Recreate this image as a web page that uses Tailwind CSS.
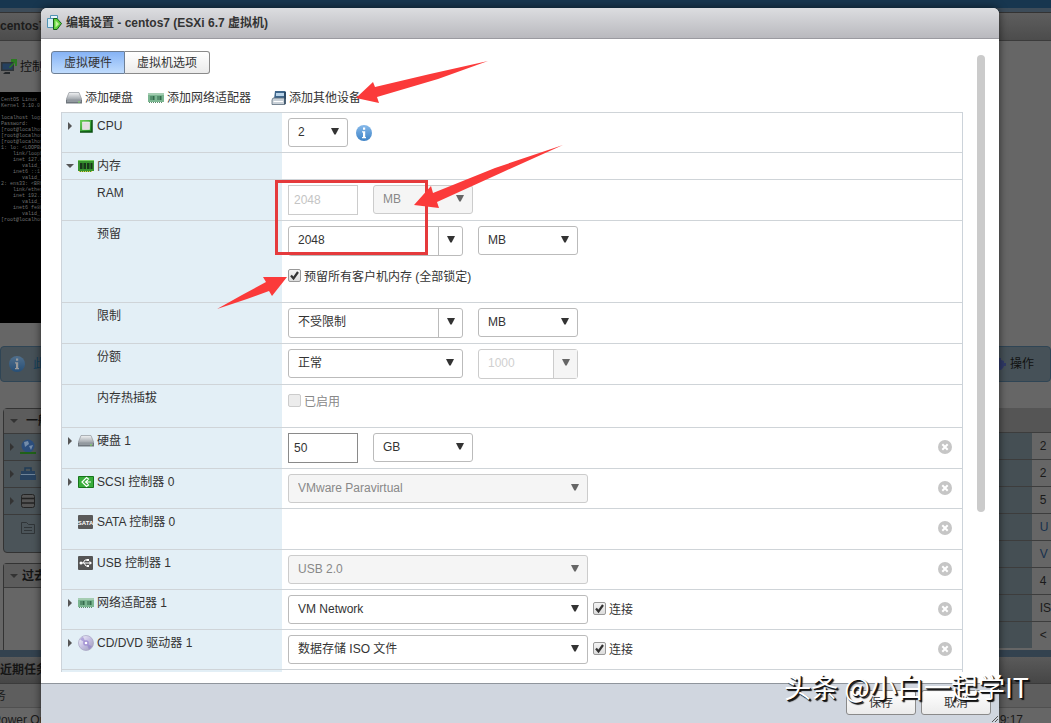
<!DOCTYPE html>
<html lang="zh-CN">
<head>
    <meta charset="UTF-8">
    <meta name="viewport" content="width=device-width, initial-scale=1.0">
    <title>编辑设置 - centos7</title>
    <script src="https://cdn.jsdelivr.net/npm/@tailwindcss/browser@4"></script>
</head>
<body class="relative h-screen overflow-hidden bg-[#666] font-['Liberation_Sans','Noto_Sans_CJK_SC',sans-serif] text-xs leading-4 text-[#333]">

    <!-- Icônes partagées -->
    <svg class="absolute size-0">
        <defs>
            <linearGradient id="g-disk" x1="0" y1="0" x2="0" y2="1"><stop offset="0" stop-color="#f2f3f4"/><stop offset="1" stop-color="#9aa0a6"/></linearGradient>
            <linearGradient id="g-info" x1="0" y1="0" x2="0" y2="1"><stop offset="0" stop-color="#86b9ea"/><stop offset="1" stop-color="#3f83c6"/></linearGradient>
            <linearGradient id="g-green" x1="0" y1="0" x2="1" y2="1"><stop offset="0" stop-color="#6fcf5a"/><stop offset="1" stop-color="#17801d"/></linearGradient>
            <linearGradient id="g-cd" x1="0" y1="0" x2="1" y2="1"><stop offset="0" stop-color="#fafafd"/><stop offset=".5" stop-color="#c5bfe2"/><stop offset="1" stop-color="#9d9cb8"/></linearGradient>
        </defs>
        <symbol id="i-down" viewBox="0 0 8 7"><path d="M0 0h8L4.700 6.500H3.300z" fill="currentColor"/></symbol>
        <symbol id="i-closed" viewBox="0 0 8 8"><path d="M2 0l4 4-4 4z" fill="#555"/></symbol>
        <symbol id="i-open" viewBox="0 0 8 8"><path d="M0 2h8L4 6z" fill="#555"/></symbol>
        <symbol id="i-check" viewBox="0 0 13 13"><path d="M3 6.500l2.500 3L10 3" fill="none" stroke="#333" stroke-width="2.200"/></symbol>
        <symbol id="i-remove" viewBox="0 0 14 14"><circle cx="7" cy="7" r="7" fill="#c6c6c6"/><path d="M4.300 4.300l5.400 5.400m0-5.400L4.300 9.700" stroke="#fff" stroke-width="2"/></symbol>
        <symbol id="i-info" viewBox="0 0 16 16"><circle cx="8" cy="8" r="8" fill="url(#g-info)"/><path d="M7 2.500h2.200v2.200H7zM6 6.300h3.200V12H10v1.200H6V12h1V7.500H6z" fill="#fff"/></symbol>
        <symbol id="i-disk" viewBox="0 0 16 16"><path d="M3 2.500h10l3 7.500H0z" fill="url(#g-disk)" stroke="#90969c" stroke-width=".7"/><path d="M0 10h16v3.500H0z" fill="#6f767d"/><path d="M1 11h14" stroke="#b7bdc3"/><path d="M12 12h2" stroke="#7be05f"/></symbol>
        <symbol id="i-nic" viewBox="0 0 16 16"><path d="M0 3h16v9H0z" fill="#7bb691"/><path d="M0 3h16v2H0z" fill="#a5cdb2"/><path d="M2.500 6h4v4h-4zM9.500 6h4v4h-4z" fill="#356b4c"/><path d="M4 6v4m7-4v4" stroke="#77b18d"/><path d="M1 12.500h14" stroke="#5b8a6c" stroke-dasharray="1 1"/></symbol>
        <symbol id="i-cpu" viewBox="0 0 16 16"><path d="M2 2h12v12H2z" fill="url(#g-green)"/><path d="M2 14h12V2" fill="none" stroke="#0b4f11" stroke-width="1.500"/><path d="M4.500 4h7v7.500h-7z" fill="#e5dde3" stroke="#f8f8f8" stroke-width=".6"/></symbol>
        <symbol id="i-ram" viewBox="0 0 16 16"><path d="M0 2h16v11h-2v1H1v-1H0z" fill="#37932e"/><path d="M0 2.500h16" stroke="#78cf62"/><path d="M2 5h2.500v6H2zM5.500 5H8v6H5.500zM9 5h2.500v6H9zM12.500 5H14.500v6h-2z" fill="#19371a"/><path d="M1 13.500h14" stroke="#e3c94d" stroke-dasharray="1 1"/></symbol>
        <symbol id="i-scsi" viewBox="0 0 16 16"><path d="M.5 2.500h15v11H.5z" fill="#38ad3b" stroke="#16741b"/><path d="M11 5.500L8.500 3.500 4 8l4.500 4.500 2.500-2M13 8H7.500m2.500-2L7.500 8l2.500 2" fill="none" stroke="#fff" stroke-width="1.200"/></symbol>
        <symbol id="i-sata" viewBox="0 0 16 16"><rect y="1" width="15" height="14" rx="1" fill="#5a5a5a"/><text x="7.500" y="10.500" text-anchor="middle" font-size="6" font-weight="700" fill="#fff">SATA</text></symbol>
        <symbol id="i-usb" viewBox="0 0 16 16"><rect y="1" width="15" height="14" rx="1" fill="#555"/><path d="M2 8h10M5 8l2-3h2M6 8l2 3h2" fill="none" stroke="#fff"/><circle cx="3" cy="8" r="1.500" fill="#fff"/><path d="M11.500 6l2.500 2-2.500 2zM8.500 4H11v2H8.500zM9 10h2v2H9z" fill="#fff"/></symbol>
        <symbol id="i-cd" viewBox="0 0 16 16"><circle cx="8" cy="8" r="7.500" fill="url(#g-cd)" stroke="#a6a4c2" stroke-width=".7"/><path d="M8 8L2 4.500A7 7 0 0 1 5 1.800zM8 8l6 3.500a7 7 0 0 1-3 2.700z" fill="#8b79cb" opacity=".55"/><circle cx="8" cy="8" r="2.800" fill="#a493d4"/><circle cx="8" cy="8" r="1.300" fill="#fff"/></symbol>
        <symbol id="i-device" viewBox="0 0 16 16"><path d="M4 1h10l1 1v7H3z" fill="#3f668b"/><path d="M5 3h8v3H5z" fill="#b9d4ea"/><path d="M2 8h12v6.500H1V10z" fill="#c8d0d7" stroke="#5c6c7b" stroke-width=".8"/><path d="M2.500 11.500H12" stroke="#fff"/><path d="M14 2v12" stroke="#29425a" stroke-width="1.500"/></symbol>
    </svg>

    <!-- Page derrière la boîte de dialogue -->
    <div class="flex h-full flex-col" aria-hidden="true">
        <div class="h-2 shrink-0 bg-[#17364f]"></div>
        <div class="h-[5px] shrink-0 border-b border-[#333] bg-[#3d4c59]"></div>
        <div class="h-7 shrink-0 border-b border-[#3b3b3b] bg-linear-to-b from-[#5e5e5e] to-[#4c4c4c] pt-[5px] font-bold text-[#1c1c1c]">centos7</div>
        <div class="flex h-[51px] shrink-0 items-center gap-[3px] pl-px text-[#111]">
            <svg class="size-4 shrink-0" viewBox="0 0 16 16"><path d="M0 3h13v9H0z" fill="#2f3438"/><path d="M1.500 4.500h10v6h-10z" fill="#24405f"/><path d="M4 13h5v2H2z" fill="#24282b"/><path d="M8 8l5-5h-3V0h6v7h-2V4L9 9z" fill="#2c7a22"/></svg>
            控制台
        </div>
        <div class="h-[231px] w-[300px] shrink-0 bg-black pt-[5px] pl-px font-['Liberation_Mono',monospace] text-[5px] leading-[6px] whitespace-pre text-[#707070]">CentOS Linux
Kernel 3.10.0

localhost login
Password:
[root@localhost
[root@localhost
[root@localhost
1: lo: &lt;LOOPBACK
    link/loopback
    inet 127.0.0
       valid_lft
    inet6 ::1
       valid_lft
2: ens33: &lt;BROAD
    link/ether
    inet 192.168
       valid_lft
    inet6 fe80
       valid_lft
[root@localhost</div>
        <div class="mt-[23px] flex h-9 shrink-0 items-center justify-between rounded border border-[#2f4555] bg-[#465158] pr-4 pl-2">
            <span class="flex items-center gap-2 text-[#12405c]"><svg class="size-4 brightness-60"><use href="#i-info"/></svg>此虚拟机</span>
            <span class="flex items-center gap-1 text-[#111]"><svg class="size-3" viewBox="0 0 12 12"><path d="M4 0h3v2l3 1v2h2v3h-2l-1 2-2 2H4L0 8V4z" fill="#303a68"/></svg>操作</span>
        </div>
        <div class="mt-[26px] flex h-[242px] shrink-0 justify-between">
            <div class="ml-[3px] flex w-[300px] flex-col gap-[10px]">
                <div class="h-[145px] rounded border border-[#333] bg-[#4b5459]">
                    <div class="flex h-6 items-center gap-2 bg-[#5c5c5c] pl-1.5 font-bold text-[#151515]"><svg class="size-2 brightness-60"><use href="#i-open"/></svg>一般</div>
                    <div class="flex h-[27px] items-center gap-1 border-t border-[#3b3b3b] pl-1"><svg class="size-2 brightness-60"><use href="#i-closed"/></svg><svg class="size-4" viewBox="0 0 16 16"><circle cx="8" cy="7" r="6.500" fill="#2c4e7d"/><path d="M4 3l4-1 1 3-4 3zM9 7l4-1-2 5z" fill="#748caa"/><path d="M0 13h16v2H0z" fill="#1f6118"/></svg></div>
                    <div class="flex h-[27px] items-center gap-1 border-t border-[#3b3b3b] pl-1"><svg class="size-2 brightness-60"><use href="#i-closed"/></svg><svg class="size-4" viewBox="0 0 16 16"><path d="M5 5V2h6v3" fill="none" stroke="#203b55" stroke-width="1.500"/><path d="M1 5h14v3H1zM0 9h16v5H0z" fill="#28425f"/><path d="M1 8.500h14" stroke="#6e8398"/></svg></div>
                    <div class="flex h-[27px] items-center gap-1 border-t border-[#3b3b3b] pl-1"><svg class="size-2 brightness-60"><use href="#i-closed"/></svg><svg class="size-4" viewBox="0 0 16 16"><rect x="1.500" y="1.500" width="13" height="13" rx="2" fill="#555" stroke="#242424"/><path d="M2 5.500h12M2 10h12" stroke="#222" stroke-width="1.500"/></svg></div>
                    <div class="flex h-[27px] items-center border-t border-[#3b3b3b] pl-4"><svg class="size-4" viewBox="0 0 16 16"><path d="M1.500 2.500h5l2 2h6v9h-13zM4 7.500h8M4 10.500h8" fill="none" stroke="#303538"/></svg></div>
                </div>
                <div class="h-[87px] rounded-t border border-b-0 border-[#333]">
                    <div class="flex h-6 items-center gap-1 border-b border-[#3b3b3b] bg-[#5c5c5c] pl-1.5 font-bold text-[#151515]"><svg class="size-2 brightness-60"><use href="#i-open"/></svg>过去</div>
                </div>
            </div>
            <table class="h-[240px] w-[300px] text-[#1a1a1a]">
                <tbody>
                    <tr class="h-6 bg-[#555]"><td class="w-[286px]"></td><td></td></tr>
                    <tr class="border-t border-[#3d3d3d]"><td class="bg-[#454f54]"></td><td class="pl-2">2</td></tr>
                    <tr class="border-t border-[#3d3d3d]"><td class="bg-[#454f54]"></td><td class="pl-2">2</td></tr>
                    <tr class="border-t border-[#3d3d3d]"><td class="bg-[#454f54]"></td><td class="pl-2">5</td></tr>
                    <tr class="border-t border-[#3d3d3d]"><td class="bg-[#454f54]"></td><td class="pl-2 text-[#17304d]">U</td></tr>
                    <tr class="border-t border-[#3d3d3d]"><td class="bg-[#454f54]"></td><td class="pl-2 text-[#17304d]">V</td></tr>
                    <tr class="border-t border-[#3d3d3d]"><td class="bg-[#454f54]"></td><td class="pl-2">4</td></tr>
                    <tr class="border-t border-[#3d3d3d]"><td class="bg-[#454f54]"></td><td class="pl-2">IS</td></tr>
                    <tr class="border-t border-[#3d3d3d]"><td class="bg-[#454f54]"></td><td class="pl-2">&lt;</td></tr>
                </tbody>
            </table>
        </div>
        <div class="h-[7px] shrink-0 bg-[#33424f]"></div>
        <div class="h-[27px] shrink-0 border-b border-[#3b3b3b] bg-linear-to-b from-[#5a5a5a] to-[#464646] pt-[5px] font-bold text-[#151515]">近期任务</div>
        <div class="-ml-1.5 h-6 shrink-0 border-b border-[#505050] bg-[#5e5e5e] pt-1 text-[#1a1a1a]">务</div>
        <div class="-ml-[7px] flex shrink-0 justify-between pt-1 pr-7 text-[#1a1a1a]"><span>Power On VM</span><span>9:17</span></div>
    </div>

    <!-- Boîte de dialogue -->
    <div class="absolute inset-0 flex pt-2 pr-[52px] pl-[41px]">
        <form class="relative flex min-w-0 flex-1 flex-col overflow-hidden rounded-t-md bg-white shadow-[0_0_8px_rgba(0,0,0,0.6)]" role="dialog" aria-labelledby="dialog-title">
            <header class="flex h-[31px] shrink-0 items-center gap-[3px] border-b border-[#9a9aa0] bg-linear-to-b from-[#dcdde0] to-[#b9b9be] px-1.5">
                <svg class="size-4" viewBox="0 0 16 16"><path d="M3.500 .5h7v10h-7z" fill="#e9f5fb" stroke="#5193b3"/><path d="M.5 3.500h8v9h-8z" fill="#d5ecf6" stroke="#5193b3"/><path d="M6.500 3.500h3.500l4.500 5-4.500 6h-3.500z" fill="#5ed13b" stroke="#16611b"/><path d="M8.500 5.500l3.500 3.500-3.500 3.500z" fill="#c4f49e"/></svg>
                <h1 id="dialog-title" class="font-bold">编辑设置 - centos7 (ESXi 6.7 虚拟机)</h1>
            </header>

            <div class="flex min-h-0 flex-1 items-start gap-[14px] pr-[14px] pb-[11px] pl-[10px]">
                <div class="h-full min-w-0 flex-1 overflow-hidden pt-3">
                    <div class="flex">
                        <button type="button" class="h-[23px] w-[74px] rounded-l-[3px] border border-[#6d7f96] bg-linear-to-b from-[#86b3f5] to-[#c0dcfd]">虚拟硬件</button>
                        <button type="button" class="h-[23px] w-[85px] rounded-r-[3px] border border-l-0 border-[#8a8a8a] bg-linear-to-b from-white to-[#ebebeb]">虚拟机选项</button>
                    </div>

                    <div class="mt-4 ml-[15px] flex">
                        <button type="button" class="mr-[15px] flex gap-[3px]"><svg class="size-4"><use href="#i-disk"/></svg>添加硬盘</button>
                        <button type="button" class="mr-5 flex gap-[3px]"><svg class="size-4"><use href="#i-nic"/></svg>添加网络适配器</button>
                        <button type="button" class="flex gap-[2px]"><svg class="size-4"><use href="#i-device"/></svg>添加其他设备</button>
                    </div>

                    <!-- Liste du matériel -->
                    <div class="mt-1.5 ml-[10px] border-x border-[#ccd3da]">
                        <div class="flex h-10 border-t border-[#cfd4d8]">
                            <div class="flex w-[220px] shrink-0 items-start bg-[#e3eff6] pt-[5px] pl-1"><svg class="mt-1 mr-1 size-2"><use href="#i-closed"/></svg><svg class="mr-[3px] size-4"><use href="#i-cpu"/></svg><label for="cpu">CPU</label></div>
                            <div class="flex flex-1 items-start pt-[5px] pl-1.5">
                                <span class="relative w-[60px]"><select id="cpu" class="h-[29px] w-full appearance-none rounded-[3px] border border-[#bbb] bg-white pb-0.5 pl-[9px]"><option>2</option></select><svg class="pointer-events-none absolute top-[10px] right-[9px] h-[7px] w-2"><use href="#i-down"/></svg></span>
                                <svg class="mt-[7px] ml-2 size-4"><use href="#i-info"/></svg>
                            </div>
                        </div>
                        <div class="flex h-[27px] border-t border-[#cfd4d8]">
                            <div class="flex w-[220px] shrink-0 items-start bg-[#e3eff6] pt-[5px] pl-1"><svg class="mt-1 mr-1 size-2"><use href="#i-open"/></svg><svg class="mr-[3px] size-4"><use href="#i-ram"/></svg>内存</div>
                        </div>
                        <div class="flex h-[41px] border-t border-[#cfd4d8]">
                            <div class="w-[220px] shrink-0 bg-[#e3eff6] pt-[5px] pl-[35px]"><label for="ram">RAM</label></div>
                            <div class="flex flex-1 items-start gap-[15px] pt-[5px] pl-1.5">
                                <input id="ram" type="text" value="2048" disabled class="h-[30px] w-[70px] border border-[#ccc] pl-[5px] text-[#c4c4c4]">
                                <span class="relative w-[100px] text-[#666]"><select aria-label="RAM 单位" disabled class="h-[29px] w-full appearance-none rounded-[3px] border border-[#ccc] bg-[#f5f5f5] pb-0.5 pl-[9px] text-[#888] opacity-100"><option>MB</option></select><svg class="pointer-events-none absolute top-[10px] right-[9px] h-[7px] w-2"><use href="#i-down"/></svg></span>
                            </div>
                        </div>
                        <div class="flex h-[82px] border-t border-[#cfd4d8]">
                            <div class="w-[220px] shrink-0 bg-[#e3eff6] pt-[5px] pl-[35px]"><label for="reserve">预留</label></div>
                            <div class="flex-1 pt-[5px] pl-1.5">
                                <div class="flex items-start gap-[15px]">
                                    <div class="flex h-[30px] w-[175px] rounded-[3px] border border-[#bbb]">
                                        <input id="reserve" type="text" value="2048" class="min-w-0 flex-1 pb-0.5 pl-[9px]">
                                        <button type="button" aria-label="预留选项" class="flex w-6 justify-center border-l border-[#bbb] pt-[9px]"><svg class="h-[7px] w-2"><use href="#i-down"/></svg></button>
                                    </div>
                                    <span class="relative w-[100px]"><select aria-label="预留单位" class="h-[29px] w-full appearance-none rounded-[3px] border border-[#bbb] bg-white pb-0.5 pl-[9px]"><option>MB</option></select><svg class="pointer-events-none absolute top-[10px] right-[9px] h-[7px] w-2"><use href="#i-down"/></svg></span>
                                </div>
                                <label class="relative mt-[13px] flex items-start gap-[3px]">
                                    <input type="checkbox" checked class="peer size-[13px] appearance-none rounded-xs border border-[#999] bg-linear-to-b from-[#f4f4f4] to-[#ddd]"><svg class="absolute top-0 left-0 hidden size-[13px] peer-checked:block"><use href="#i-check"/></svg>预留所有客户机内存 (全部锁定)
                                </label>
                            </div>
                        </div>
                        <div class="flex h-[41px] border-t border-[#cfd4d8]">
                            <div class="w-[220px] shrink-0 bg-[#e3eff6] pt-[5px] pl-[35px]"><label for="limit">限制</label></div>
                            <div class="flex flex-1 items-start gap-[15px] pt-[5px] pl-1.5">
                                <div class="flex h-[30px] w-[175px] rounded-[3px] border border-[#bbb]">
                                    <input id="limit" type="text" value="不受限制" class="min-w-0 flex-1 pb-0.5 pl-[9px]">
                                    <button type="button" aria-label="限制选项" class="flex w-6 justify-center border-l border-[#bbb] pt-[9px]"><svg class="h-[7px] w-2"><use href="#i-down"/></svg></button>
                                </div>
                                <span class="relative w-[100px]"><select aria-label="限制单位" class="h-[29px] w-full appearance-none rounded-[3px] border border-[#bbb] bg-white pb-0.5 pl-[9px]"><option>MB</option></select><svg class="pointer-events-none absolute top-[10px] right-[9px] h-[7px] w-2"><use href="#i-down"/></svg></span>
                            </div>
                        </div>
                        <div class="flex h-[41px] border-t border-[#cfd4d8]">
                            <div class="w-[220px] shrink-0 bg-[#e3eff6] pt-[5px] pl-[35px]"><label for="shares">份额</label></div>
                            <div class="flex flex-1 items-start gap-[15px] pt-[5px] pl-1.5">
                                <span class="relative w-[175px]"><select id="shares" class="h-[29px] w-full appearance-none rounded-[3px] border border-[#bbb] bg-white pb-0.5 pl-[9px]"><option>正常</option></select><svg class="pointer-events-none absolute top-[10px] right-[9px] h-[7px] w-2"><use href="#i-down"/></svg></span>
                                <div class="flex h-[30px] w-[100px] rounded-[3px] border border-[#ccc]">
                                    <input type="text" aria-label="份额值" value="1000" disabled class="min-w-0 flex-1 pb-0.5 pl-[9px] text-[#d0d0d0]">
                                    <button type="button" aria-label="份额选项" disabled class="flex w-6 justify-center border-l border-[#ccc] bg-[#f5f5f5] pt-[9px] text-[#666]"><svg class="h-[7px] w-2"><use href="#i-down"/></svg></button>
                                </div>
                            </div>
                        </div>
                        <div class="flex h-[43px] border-t border-[#cfd4d8]">
                            <div class="w-[220px] shrink-0 bg-[#e3eff6] pt-[5px] pl-[35px]">内存热插拔</div>
                            <div class="flex-1 pt-[9px] pl-1.5">
                                <label class="flex items-start gap-[3px] text-[#888]"><input type="checkbox" disabled class="size-[13px] appearance-none rounded-xs border border-[#ccc] bg-[#ececec]">已启用</label>
                            </div>
                        </div>
                        <div class="flex h-[41px] border-t border-[#cfd4d8]">
                            <div class="flex w-[220px] shrink-0 items-start bg-[#e3eff6] pt-[5px] pl-1"><svg class="mt-1 mr-1 size-2"><use href="#i-closed"/></svg><svg class="mr-[3px] size-4"><use href="#i-disk"/></svg><label for="disk">硬盘 1</label></div>
                            <div class="flex flex-1 items-start gap-[15px] pt-[5px] pr-[10px] pl-1.5">
                                <input id="disk" type="text" value="50" class="h-[30px] w-[70px] border border-[#8a8a8a] pl-[5px]">
                                <span class="relative w-[100px]"><select aria-label="硬盘单位" class="h-[29px] w-full appearance-none rounded-[3px] border border-[#bbb] bg-white pb-0.5 pl-[9px]"><option>GB</option></select><svg class="pointer-events-none absolute top-[10px] right-[9px] h-[7px] w-2"><use href="#i-down"/></svg></span>
                                <button type="button" aria-label="移除" class="mt-[7px] ml-auto"><svg class="size-[14px]"><use href="#i-remove"/></svg></button>
                            </div>
                        </div>
                        <div class="flex h-10 border-t border-[#cfd4d8]">
                            <div class="flex w-[220px] shrink-0 items-start bg-[#e3eff6] pt-[5px] pl-1"><svg class="mt-1 mr-1 size-2"><use href="#i-closed"/></svg><svg class="mr-[3px] size-4"><use href="#i-scsi"/></svg><label for="scsi">SCSI 控制器 0</label></div>
                            <div class="flex flex-1 items-start pt-[5px] pr-[10px] pl-1.5">
                                <span class="relative w-[300px] text-[#666]"><select id="scsi" disabled class="h-[29px] w-full appearance-none rounded-[3px] border border-[#ccc] bg-[#f5f5f5] pb-0.5 pl-[9px] text-[#888] opacity-100"><option>VMware Paravirtual</option></select><svg class="pointer-events-none absolute top-[10px] right-[9px] h-[7px] w-2"><use href="#i-down"/></svg></span>
                                <button type="button" aria-label="移除" class="mt-[7px] ml-auto"><svg class="size-[14px]"><use href="#i-remove"/></svg></button>
                            </div>
                        </div>
                        <div class="flex h-[41px] border-t border-[#cfd4d8]">
                            <div class="flex w-[220px] shrink-0 items-start bg-[#e3eff6] pt-[5px] pl-4"><svg class="mr-[3px] size-4"><use href="#i-sata"/></svg>SATA 控制器 0</div>
                            <div class="flex flex-1 items-start pt-[5px] pr-[10px] pl-1.5">
                                <button type="button" aria-label="移除" class="mt-[7px] ml-auto"><svg class="size-[14px]"><use href="#i-remove"/></svg></button>
                            </div>
                        </div>
                        <div class="flex h-10 border-t border-[#cfd4d8]">
                            <div class="flex w-[220px] shrink-0 items-start bg-[#e3eff6] pt-[5px] pl-4"><svg class="mr-[3px] size-4"><use href="#i-usb"/></svg><label for="usb">USB 控制器 1</label></div>
                            <div class="flex flex-1 items-start pt-[5px] pr-[10px] pl-1.5">
                                <span class="relative w-[300px] text-[#666]"><select id="usb" disabled class="h-[29px] w-full appearance-none rounded-[3px] border border-[#ccc] bg-[#f5f5f5] pb-0.5 pl-[9px] text-[#888] opacity-100"><option>USB 2.0</option></select><svg class="pointer-events-none absolute top-[10px] right-[9px] h-[7px] w-2"><use href="#i-down"/></svg></span>
                                <button type="button" aria-label="移除" class="mt-[7px] ml-auto"><svg class="size-[14px]"><use href="#i-remove"/></svg></button>
                            </div>
                        </div>
                        <div class="flex h-10 border-t border-[#cfd4d8]">
                            <div class="flex w-[220px] shrink-0 items-start bg-[#e3eff6] pt-[5px] pl-1"><svg class="mt-1 mr-1 size-2"><use href="#i-closed"/></svg><svg class="mr-[3px] size-4"><use href="#i-nic"/></svg><label for="net">网络适配器 1</label></div>
                            <div class="flex flex-1 items-start pt-[5px] pr-[10px] pl-1.5">
                                <span class="relative w-[300px]"><select id="net" class="h-[29px] w-full appearance-none rounded-[3px] border border-[#bbb] bg-white pb-0.5 pl-[9px]"><option>VM Network</option></select><svg class="pointer-events-none absolute top-[10px] right-[9px] h-[7px] w-2"><use href="#i-down"/></svg></span>
                                <label class="relative mt-[7px] ml-[5px] flex items-start gap-[3px]"><input type="checkbox" checked class="peer size-[13px] appearance-none rounded-xs border border-[#999] bg-linear-to-b from-[#f4f4f4] to-[#ddd]"><svg class="absolute top-0 left-0 hidden size-[13px] peer-checked:block"><use href="#i-check"/></svg>连接</label>
                                <button type="button" aria-label="移除" class="mt-[7px] ml-auto"><svg class="size-[14px]"><use href="#i-remove"/></svg></button>
                            </div>
                        </div>
                        <div class="flex h-10 border-t border-[#cfd4d8]">
                            <div class="flex w-[220px] shrink-0 items-start bg-[#e3eff6] pt-[5px] pl-1"><svg class="mt-1 mr-1 size-2"><use href="#i-closed"/></svg><svg class="mr-[3px] size-4"><use href="#i-cd"/></svg><label for="cd">CD/DVD 驱动器 1</label></div>
                            <div class="flex flex-1 items-start pt-[5px] pr-[10px] pl-1.5">
                                <span class="relative w-[300px]"><select id="cd" class="h-[29px] w-full appearance-none rounded-[3px] border border-[#bbb] bg-white pb-0.5 pl-[9px]"><option>数据存储 ISO 文件</option></select><svg class="pointer-events-none absolute top-[10px] right-[9px] h-[7px] w-2"><use href="#i-down"/></svg></span>
                                <label class="relative mt-[7px] ml-[5px] flex items-start gap-[3px]"><input type="checkbox" checked class="peer size-[13px] appearance-none rounded-xs border border-[#999] bg-linear-to-b from-[#f4f4f4] to-[#ddd]"><svg class="absolute top-0 left-0 hidden size-[13px] peer-checked:block"><use href="#i-check"/></svg>连接</label>
                                <button type="button" aria-label="移除" class="mt-[7px] ml-auto"><svg class="size-[14px]"><use href="#i-remove"/></svg></button>
                            </div>
                        </div>
                        <div class="flex h-10 border-t border-[#cfd4d8]">
                            <div class="w-[220px] bg-[#e3eff6]"></div>
                        </div>
                    </div>
                </div>
                <!-- Barre de défilement -->
                <div class="h-full w-2 shrink-0 pt-4"><div class="h-[74%] rounded-full bg-[#cbcbcb]"></div></div>
            </div>

            <footer class="flex h-10 shrink-0 items-start justify-end gap-[5px] border-t border-[#8f959c] bg-[#d0d6df] px-2 pt-1.5">
                <button type="submit" class="h-[25px] w-[70px] rounded-[3px] border border-[#8a8a8a] bg-linear-to-b from-white to-[#ebebeb]">保存</button>
                <button type="button" class="h-[25px] w-[70px] rounded-[3px] border border-[#8a8a8a] bg-linear-to-b from-white to-[#ebebeb]">取消</button>
                <svg class="absolute right-0 bottom-0 size-2" viewBox="0 0 8 8"><path d="M1 7l6-6M4 7l3-3" stroke="#555"/></svg>
            </footer>
        </form>
    </div>

    <!-- Annotations -->
    <svg class="pointer-events-none absolute top-0 left-0 h-[723px] w-[1051px]" viewBox="0 0 1051 723">
        <path d="M276.500 181.500h150v72h-150z" fill="none" stroke="#e53a3c" stroke-width="3"/>
        <g fill="#fb3a3a">
            <path d="M356 98l17-16 2 5 55-13 58-13-50 18-61 18 2 6z"/>
            <path d="M414 205l17-19 2 7 62-25 68-23-60 27-66 30 2 6z"/>
            <path d="M287 277l-15 19-3-5-22 8-30 10 25-14 24-13-3-5z"/>
        </g>
    </svg>
    <p class="pointer-events-none absolute right-[22px] bottom-[19px] font-['Noto_Sans_CJK_SC',sans-serif] text-[27px] leading-[34px] whitespace-nowrap text-white [text-shadow:2px_2px_1px_#111,1px_1px_0_#111]">头条 @小白一起学IT</p>
</body>
</html>
